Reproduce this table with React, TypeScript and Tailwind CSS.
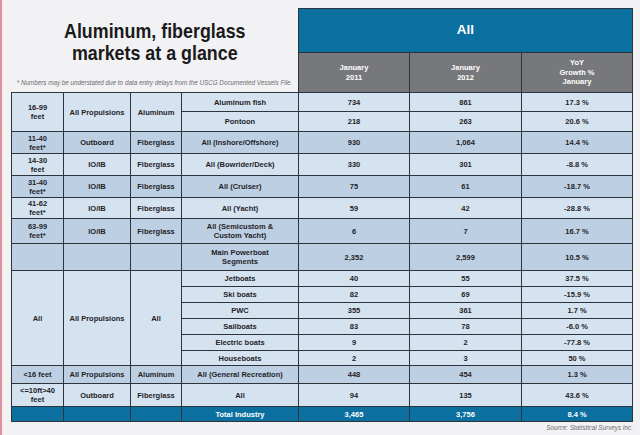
import type { ReactNode } from 'react'

const L = 'bg-[#d5e2ef]'
const D = 'bg-[#bdd0e3]'
const B = 'bg-[#0b6fa0] text-white'

function C({ c, className = '', children }: { c: string; className?: string; children?: ReactNode }) {
  return (
    <div className={`flex items-center justify-center text-center leading-[1.2] ${c} ${className}`}>
      {children}
    </div>
  )
}

function Row({ c, label, a, b, g }: { c: string; label: ReactNode; a: string; b: string; g: string }) {
  return (
    <>
      <C c={c}>{label}</C>
      <C c={c}>{a}</C>
      <C c={c}>{b}</C>
      <C c={c}>{g}</C>
    </>
  )
}

export default function App() {
  return (
    <div
      className="w-[640px] h-[435px] bg-[#f2f2f4] flex overflow-hidden text-[#1f2328]"
      style={{ fontFamily: '"Liberation Sans", Arial, sans-serif' }}
    >
      <div className="w-[2px] h-full bg-[#e0909e]" />
      <div className="w-[1px] h-full bg-[#f9f8ef] ml-[3px]" />

      <div className="ml-[5px] w-[622px] pt-[8px] flex flex-col">
        {/* header */}
        <div className="flex">
          <div className="w-[287px] flex flex-col items-center">
            <h1 className="mt-[12px] text-[21px] leading-[22px] font-bold text-center text-[#1a1a1a] whitespace-nowrap scale-x-[0.85]">
              Aluminum, fiberglass
              <br />
              markets at a glance
            </h1>
            <p className="mt-auto mb-[5px] text-[6.3px] leading-[8px] italic text-[#6b6b6f] whitespace-nowrap">
              * Numbers may be understated due to data entry delays from the USCG Documented Vessels File.
            </p>
          </div>
          <div className="w-[335px] grid grid-cols-[110px_111px_110px] grid-rows-[43px_39px] gap-px p-px pb-0 bg-[#2e343c] text-white font-bold">
            <div className="col-span-3 bg-[#0b6fa0] flex items-center justify-center text-[13.5px]">All</div>
            <div className="bg-[#77787b] flex items-center justify-center text-center text-[7.5px] leading-[1.25]">
              January
              <br />
              2011
            </div>
            <div className="bg-[#77787b] flex items-center justify-center text-center text-[7.5px] leading-[1.25]">
              January
              <br />
              2012
            </div>
            <div className="bg-[#77787b] flex items-center justify-center text-center text-[7.5px] leading-[1.25]">
              YoY
              <br />
              Growth %
              <br />
              January
            </div>
          </div>
        </div>

        {/* table */}
        <div className="grid grid-cols-[51px_66px_50px_116px_110px_111px_110px] grid-rows-[18px_19px_21px_21px_21px_20px_24px_26px_15px_15px_15px_15px_15px_14px_17px_22px_14px] gap-px p-px bg-[#2e343c] text-[7.5px] font-bold">
          <C c={L} className="row-span-2">16-99<br />feet</C>
          <C c={L} className="row-span-2">All Propulsions</C>
          <C c={L} className="row-span-2">Aluminum</C>
          <Row c={L} label="Aluminum fish" a="734" b="861" g="17.3 %" />
          <Row c={L} label="Pontoon" a="218" b="263" g="20.6 %" />

          <C c={D}>11-40<br />feet*</C>
          <C c={D}>Outboard</C>
          <C c={D}>Fiberglass</C>
          <Row c={D} label="All (Inshore/Offshore)" a="930" b="1,064" g="14.4 %" />

          <C c={L}>14-30<br />feet</C>
          <C c={L}>IO/IB</C>
          <C c={L}>Fiberglass</C>
          <Row c={L} label="All (Bowrider/Deck)" a="330" b="301" g="-8.8 %" />

          <C c={D}>31-40<br />feet*</C>
          <C c={D}>IO/IB</C>
          <C c={D}>Fiberglass</C>
          <Row c={D} label="All (Cruiser)" a="75" b="61" g="-18.7 %" />

          <C c={L}>41-62<br />feet*</C>
          <C c={L}>IO/IB</C>
          <C c={L}>Fiberglass</C>
          <Row c={L} label="All (Yacht)" a="59" b="42" g="-28.8 %" />

          <C c={D}>63-99<br />feet*</C>
          <C c={D}>IO/IB</C>
          <C c={D}>Fiberglass</C>
          <Row c={D} label={<>All (Semicustom &amp;<br />Custom Yacht)</>} a="6" b="7" g="16.7 %" />

          <C c={D} />
          <C c={D} />
          <C c={D} />
          <Row c={D} label={<>Main Powerboat<br />Segments</>} a="2,352" b="2,599" g="10.5 %" />

          <C c={L} className="row-span-6">All</C>
          <C c={L} className="row-span-6">All Propulsions</C>
          <C c={L} className="row-span-6">All</C>
          <Row c={L} label="Jetboats" a="40" b="55" g="37.5 %" />
          <Row c={L} label="Ski boats" a="82" b="69" g="-15.9 %" />
          <Row c={L} label="PWC" a="355" b="361" g="1.7 %" />
          <Row c={L} label="Sailboats" a="83" b="78" g="-6.0 %" />
          <Row c={L} label="Electric boats" a="9" b="2" g="-77.8 %" />
          <Row c={L} label="Houseboats" a="2" b="3" g="50 %" />

          <C c={D}>&lt;16 feet</C>
          <C c={D}>All Propulsions</C>
          <C c={D}>Aluminum</C>
          <Row c={D} label="All (General Recreation)" a="448" b="454" g="1.3 %" />

          <C c={L}>&lt;=10ft&gt;40<br />feet</C>
          <C c={L}>Outboard</C>
          <C c={L}>Fiberglass</C>
          <Row c={L} label="All" a="94" b="135" g="43.6 %" />

          <C c={B} />
          <C c={B} />
          <C c={B} />
          <Row c={B} label="Total Industry" a="3,465" b="3,756" g="8.4 %" />
        </div>

        <p className="mt-[2px] text-right text-[6.3px] leading-[8px] italic text-[#6b6b6f]">
          Source: Statistical Surveys Inc.
        </p>
      </div>
    </div>
  )
}
